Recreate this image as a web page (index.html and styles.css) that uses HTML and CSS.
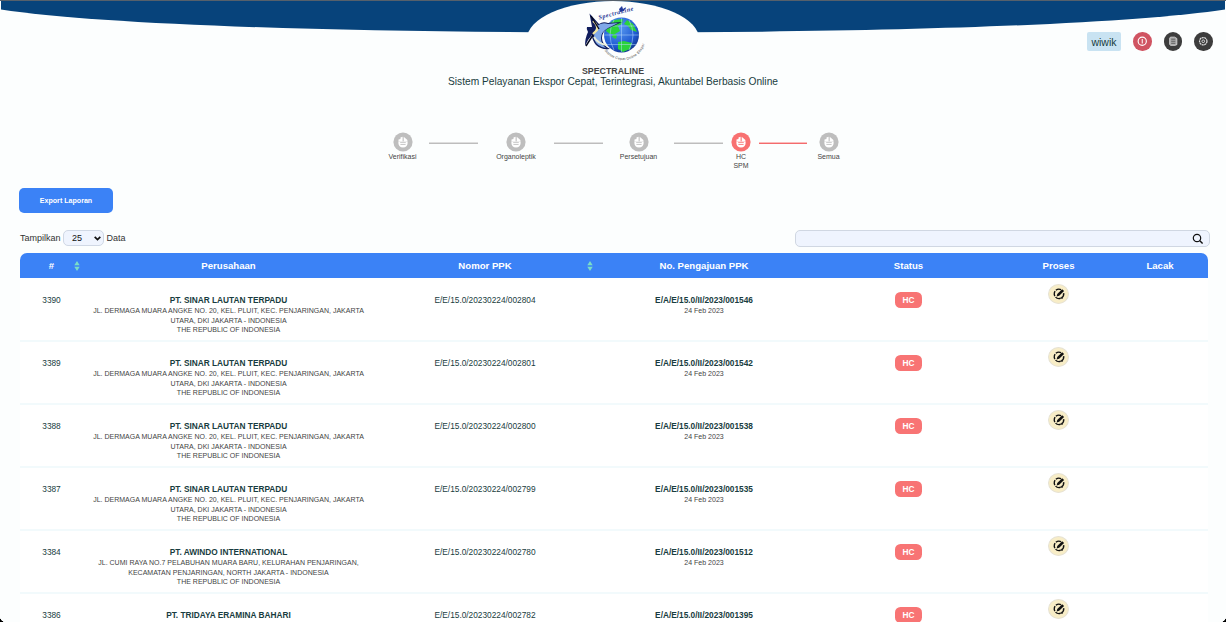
FILE: index.html
```
<!DOCTYPE html>
<html lang="id">
<head>
<meta charset="utf-8">
<title>Spectraline</title>
<link rel="stylesheet" href="styles.css">
</head>
<body>
<svg class="defs" width="0" height="0" aria-hidden="true">
  <symbol id="cup" viewBox="0 0 20 20"><circle cx="10" cy="10" r="9.6" fill="currentColor"/><path d="M5.400 9.400h9.200v1.600c0 2.700-1.700 4.600-4.600 4.600s-4.600-1.900-4.600-4.600z" fill="#fff"/><path d="M9.600 4.800v4.800H5.500V7.500l2-.4V5.500zM10.700 4.800l3.700 3.200v1.600h-3.700z" fill="#fff"/><path d="M7.200 10.600h5.600M7.400 12.500h5.200" stroke="currentColor" stroke-width=".8"/></symbol>
  <symbol id="edit" viewBox="0 0 16 16"><path d="M10.300 3A5.400 5.400 0 1 0 13.200 6.500" fill="none" stroke="#111" stroke-width="1.600" stroke-dasharray="6 1.200"/><path d="M5.300 10.900l.7-3 5.600-5.300 2.200 2.100-5.600 5.400z" fill="#111"/><path d="M8.500 12.700h4" stroke="#111" stroke-width="1.100"/></symbol>
</svg>
<header class="top">
  <svg class="wave" viewBox="0 0 1226 70" aria-hidden="true">
    <path d="M1 0H1225V9.500C1130 24 900 32.500 613 32.500S96 24 1 9.500z" fill="#07437b"/>
    <path d="M0 .5H1226" stroke="#56606b"/>
    <ellipse cx="613" cy="39" rx="86" ry="38" fill="#fdfefe"/>
  </svg>
  <nav class="tools">
    <span class="user">wiwik</span>
    <svg class="tool danger" viewBox="0 0 18 18"><circle cx="9" cy="9" r="4" fill="none" stroke="#fff" stroke-width="1.100"/><path d="M9 6.800v4.400" stroke="#fff"/></svg>
    <svg class="tool" viewBox="0 0 18 18"><path d="M6.300 5h4l2.200 1.300v6L10.800 13H6.300L5.500 12V6z" fill="#aaa" stroke="#ddd" stroke-width=".8"/><path d="M7 7h4M7 9h4M7 11h4" stroke="#444" stroke-width=".7"/></svg>
    <svg class="tool" viewBox="0 0 18 18"><circle cx="9" cy="9" r="3.600" fill="none" stroke="#ddd" stroke-width="1.200" stroke-dasharray="2 .5"/><circle cx="9" cy="9" r="1.300" fill="none" stroke="#ddd" stroke-width=".9"/></svg>
  </nav>
  <div class="brand">
    <svg class="logo" viewBox="0 0 60 58" role="img" aria-label="Spectraline">
      <defs>
        <radialGradient id="sea" cx=".4" cy=".3" r=".8"><stop offset="0" stop-color="#5b9df2"/><stop offset=".65" stop-color="#205bd2"/><stop offset="1" stop-color="#102b78"/></radialGradient>
        <path id="arcBottom" d="M21.500 46.500A22 22 0 0 0 58.500 20"/>
      </defs>
      <circle cx="38.500" cy="31" r="17.500" fill="url(#sea)"/>
      <path d="M25 21l6-5 9-1-1 5-4 2 2 5-5 3-5 0-4-3zM44 16l6 4 4 8-6-2-3-4-4-2zM35 38l6-1 8 2-2 6-7 3-5-3zM30 30l4 1-1 4-4-2z" fill="#2bd33b"/>
      <path d="M21 31h35M24 22h29M24 40.500h29M38.500 14v34M31 16q-8 15 0 30M46 16q8 15 0 30" fill="none" stroke="#b8dcff" stroke-width=".5"/>
      <path d="M6.500 9.500L16 20q4-3 9-1l14-1-13 6q-7 3-7 10 0 7 8 11-9 1-14-4-4-5-4-10-4 4-7 11 0-8 3-14-2-3-1-5l5 0z" fill="#101d5d"/>
      <path d="M14 22q5-4 11-2l10-1-10 5q-7 4-7 10 0 6 5 10-9-1-12-9 0-8 3-13z" fill="#81a9e9"/>
      <path d="M10 17q5 4 4 9l-4 4" fill="none" stroke="#f4e79f" stroke-width="2.200"/>
      <path d="M11 33q4 7 13 8" fill="none" stroke="#e9edda" stroke-width="2"/>
      <path d="M8 12l8 13M3 42l7-11" stroke="#05091f" stroke-width="1.400" fill="none"/>
      <path d="M36 5l3-3 1 3 3-2-2 4-4 1z" fill="#253b9b"/>
      <text class="logo-name" transform="translate(16 15.500) rotate(-15)">SpectraLine</text>
      <text class="logo-motto"><textPath href="#arcBottom">Sistem Cepat Online Ekspor</textPath></text>
    </svg>
    <h1 class="name">SPECTRALINE</h1>
    <p class="tagline">Sistem Pelayanan Ekspor Cepat, Terintegrasi, Akuntabel Berbasis Online</p>
  </div>
</header>
<main class="page">
  <div class="steps">
    <div class="step s1"><svg><use href="#cup"/></svg><span>Verifikasi</span></div><i class="link"></i>
    <div class="step s2"><svg><use href="#cup"/></svg><span>Organoleptik</span></div><i class="link"></i>
    <div class="step s3"><svg><use href="#cup"/></svg><span>Persetujuan</span></div><i class="link"></i>
    <div class="step s4 active"><svg><use href="#cup"/></svg><span>HC<br>SPM</span></div><i class="link link-active"></i>
    <div class="step s5"><svg><use href="#cup"/></svg><span>Semua</span></div>
  </div>
  <button class="export">Export Laporan</button>
  <div class="filters">
    <div class="length">Tampilkan <span class="select">25<svg viewBox="0 0 8 6"><path d="M1.500 1.500L4 4l2.500-2.500" fill="none" stroke="#111" stroke-width="1.500"/></svg></span> Data</div>
    <div class="search"><svg viewBox="0 0 12 12"><circle cx="5" cy="5" r="3.700" fill="none" stroke="#111" stroke-width="1.200"/><path d="M7.800 7.800l2.800 2.800" stroke="#111" stroke-width="1.400"/></svg></div>
  </div>
  <div class="table">
    <div class="row head">
      <div>#<svg class="sort" viewBox="0 0 6 10"><path d="M3 0l2.700 4.300H.3zM3 10L.3 5.700h5.400z"/></svg></div><div>Perusahaan</div><div>Nomor PPK<svg class="sort" viewBox="0 0 6 10"><path d="M3 0l2.700 4.300H.3zM3 10L.3 5.700h5.400z"/></svg></div><div>No. Pengajuan PPK</div><div>Status</div><div>Proses</div><div>Lacak</div>
    </div>
    <div class="row"><div>3390</div><div><b class="co">PT. SINAR LAUTAN TERPADU</b><p>JL. DERMAGA MUARA ANGKE NO. 20, KEL. PLUIT, KEC. PENJARINGAN, JAKARTA<br>UTARA, DKI JAKARTA - INDONESIA<br>THE REPUBLIC OF INDONESIA</p></div><div>E/E/15.0/20230224/002804</div><div><b class="no">E/A/E/15.0/II/2023/001546</b><p>24 Feb 2023</p></div><div><span class="badge">HC</span></div><div><span class="edit"><svg><use href="#edit"/></svg></span></div><div></div></div>
    <div class="row"><div>3389</div><div><b class="co">PT. SINAR LAUTAN TERPADU</b><p>JL. DERMAGA MUARA ANGKE NO. 20, KEL. PLUIT, KEC. PENJARINGAN, JAKARTA<br>UTARA, DKI JAKARTA - INDONESIA<br>THE REPUBLIC OF INDONESIA</p></div><div>E/E/15.0/20230224/002801</div><div><b class="no">E/A/E/15.0/II/2023/001542</b><p>24 Feb 2023</p></div><div><span class="badge">HC</span></div><div><span class="edit"><svg><use href="#edit"/></svg></span></div><div></div></div>
    <div class="row"><div>3388</div><div><b class="co">PT. SINAR LAUTAN TERPADU</b><p>JL. DERMAGA MUARA ANGKE NO. 20, KEL. PLUIT, KEC. PENJARINGAN, JAKARTA<br>UTARA, DKI JAKARTA - INDONESIA<br>THE REPUBLIC OF INDONESIA</p></div><div>E/E/15.0/20230224/002800</div><div><b class="no">E/A/E/15.0/II/2023/001538</b><p>24 Feb 2023</p></div><div><span class="badge">HC</span></div><div><span class="edit"><svg><use href="#edit"/></svg></span></div><div></div></div>
    <div class="row"><div>3387</div><div><b class="co">PT. SINAR LAUTAN TERPADU</b><p>JL. DERMAGA MUARA ANGKE NO. 20, KEL. PLUIT, KEC. PENJARINGAN, JAKARTA<br>UTARA, DKI JAKARTA - INDONESIA<br>THE REPUBLIC OF INDONESIA</p></div><div>E/E/15.0/20230224/002799</div><div><b class="no">E/A/E/15.0/II/2023/001535</b><p>24 Feb 2023</p></div><div><span class="badge">HC</span></div><div><span class="edit"><svg><use href="#edit"/></svg></span></div><div></div></div>
    <div class="row"><div>3384</div><div><b class="co">PT. AWINDO INTERNATIONAL</b><p>JL. CUMI RAYA NO.7 PELABUHAN MUARA BARU, KELURAHAN PENJARINGAN,<br>KECAMATAN PENJARINGAN, NORTH JAKARTA - INDONESIA<br>THE REPUBLIC OF INDONESIA</p></div><div>E/E/15.0/20230224/002780</div><div><b class="no">E/A/E/15.0/II/2023/001512</b><p>24 Feb 2023</p></div><div><span class="badge">HC</span></div><div><span class="edit"><svg><use href="#edit"/></svg></span></div><div></div></div>
    <div class="row last"><div>3386</div><div><b class="co">PT. TRIDAYA ERAMINA BAHARI</b></div><div>E/E/15.0/20230224/002782</div><div><b class="no">E/A/E/15.0/II/2023/001395</b></div><div><span class="badge">HC</span></div><div><span class="edit"><svg><use href="#edit"/></svg></span></div><div></div></div>
  </div>
</main>
<i class="corner left"></i><i class="corner right"></i>
</body>
</html>
```
FILE: styles.css
```
* { box-sizing: border-box; }
body { margin: 0; width: 1226px; height: 622px; overflow: hidden; position: relative; background: #fcfefe; color: #183c40; font-family: "Liberation Sans", Arial, sans-serif; font-size: 8.3px; }
h1, p { margin: 0; }
svg { display: block; }
.defs { position: absolute; }
.top { position: relative; height: 132px; }
.wave { position: absolute; inset: 0; width: 1226px; height: 70px; }
.tools { position: absolute; top: 32px; right: 13.500px; display: flex; align-items: center; gap: 12px; }
.user { height: 19px; padding: 0 4.500px; line-height: 21px; font-size: 10.500px; background: #c9e3f2; border-radius: 2px; }
.tool { width: 18.500px; height: 18.500px; border-radius: 50%; background: #3d3d3d; }
.tool.danger { background: #d05462; }
.brand { position: relative; display: flex; flex-direction: column; align-items: center; padding-top: 4px; }
.logo { width: 60px; height: 58px; overflow: visible; }
.logo-name { font: italic bold 6.200px "Liberation Serif", serif; fill: #1d3694; letter-spacing: .5px; }
.logo-motto { font-size: 3.600px; fill: #444; letter-spacing: .2px; }
.name { margin-top: 4px; font-size: 8.800px; line-height: 10px; color: #444; }
.tagline { font-size: 10.200px; line-height: 11px; }
.steps { display: flex; height: 56px; padding-left: 376px; font-size: 7px; color: #444; }
.step { display: flex; flex-direction: column; align-items: center; text-align: center; line-height: 9px; color: #bebebe; }
.step svg { width: 20px; height: 20px; flex: none; }
.step span { color: #444; white-space: nowrap; }
.step.active { color: #f87171; }
.s1 { width: 53px; } .s2 { width: 76px; } .s3 { width: 71px; } .s4 { width: 36px; } .s5 { width: 43px; }
.link { width: 49px; height: 2px; margin-top: 10px; background: linear-gradient(#dedede 50%, #bdbdbd 50%); }
.link-active { width: 48px; background: linear-gradient(#fbbcbc 50%, #f36b6d 50%); }
.export { display: block; width: 94px; height: 25px; margin-left: 19px; padding: 0; border: 0; border-radius: 5px; background: #3b82f6; color: #fff; font: bold 7.100px "Liberation Sans", Arial, sans-serif; }
.filters { display: flex; justify-content: space-between; margin: 16px 16px 0 20px; height: 18px; }
.length { display: flex; align-items: center; gap: 2.500px; font-size: 9px; color: #333; }
.select { display: flex; align-items: center; justify-content: space-between; width: 41px; height: 16px; padding: 0 1px 0 8px; border: 1px solid #d0d8e5; border-radius: 5px; background: #eff4fe; color: #111; }
.select svg { width: 9px; height: 7px; }
.search { display: flex; align-items: center; justify-content: flex-end; width: 415px; height: 17px; margin-top: 1px; padding-right: 5px; border: 1px solid #d0d7e2; border-radius: 5px; background: #eff4fe; }
.search svg { width: 12px; height: 12px; }
.table { width: 1188px; margin: 6px 0 0 20px; background: #fff; border-radius: 7px 7px 0 0; overflow: hidden; }
.row { display: grid; grid-template-columns: 63px 291px 222px 216px 193px 107px 96px; height: 63px; border-bottom: 2px solid #f2fafc; text-align: center; line-height: 10px; white-space: nowrap; }
.row.last { height: 28px; border: 0; }
.row > div { padding-top: 16px; }
.row p { color: #444; font-size: 7.020px; line-height: 9.700px; margin-top: 1px; }
.row b { display: block; }
.row.head { height: 25px; margin-bottom: 1px; border: 0; background: #3b82f6; color: #fff; font-size: 9.600px; font-weight: bold; line-height: 25px; }
.row.head > div { position: relative; padding: 0; }
.sort { position: absolute; right: 3px; top: 8px; width: 6px; height: 10px; fill: #7addc8; }
.badge { display: inline-block; width: 27px; height: 16px; margin-top: -3px; border-radius: 5.500px; background: #f87474; color: #fff; font-weight: bold; line-height: 16px; }
.row .edit { display: flex; align-items: center; justify-content: center; width: 21px; height: 20px; margin: -11px auto 0; border: 1px solid #e6e2d4; border-radius: 50%; background: #f8edc6; }
.edit svg { width: 14px; height: 14px; }
.corner { position: absolute; bottom: 0; width: 6px; height: 6px; }
.corner.left { left: 0; background: radial-gradient(circle at 100% 0, transparent 6px, #000 6.500px); }
.corner.right { right: 0; background: radial-gradient(circle at 0 0, transparent 6px, #000 6.500px); }
```
